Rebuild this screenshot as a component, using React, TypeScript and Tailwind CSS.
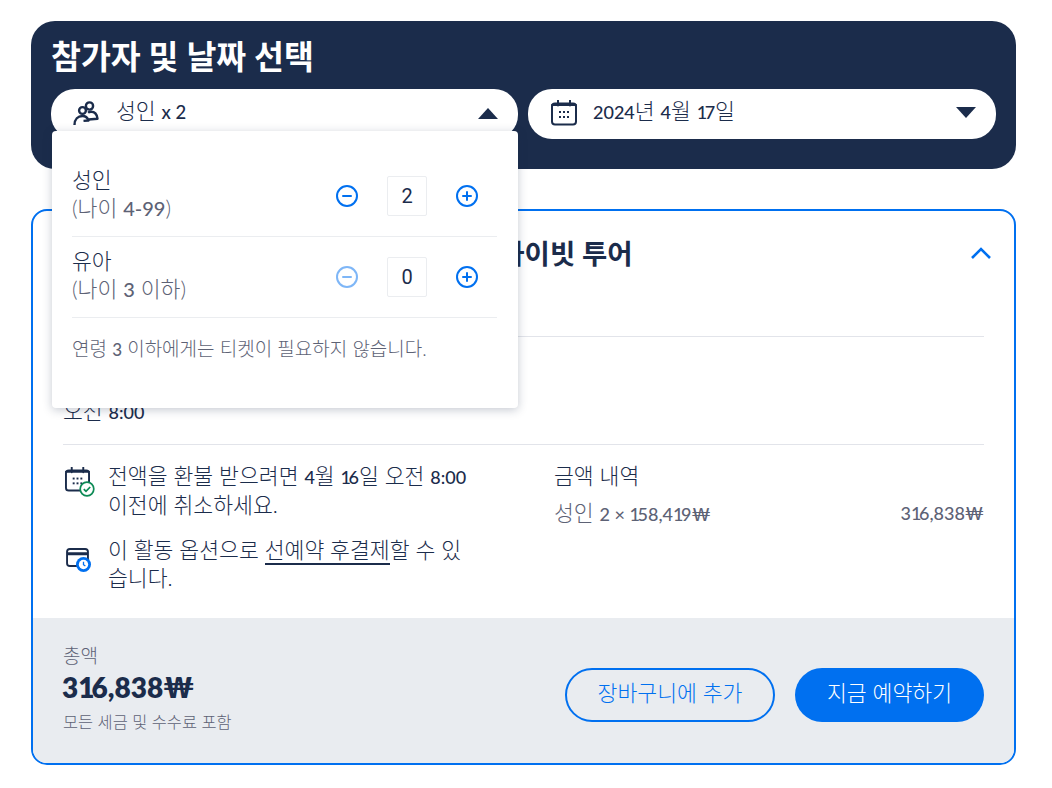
import { CircleMinus, CirclePlus } from "lucide-react";

const L = ({ children }: { children: React.ReactNode }) => (
  <span className="text-[18px] font-medium">{children}</span>
);
const S = ({ children }: { children: React.ReactNode }) => (
  <span className="text-[17px] font-medium">{children}</span>
);
const One = () => <span className="tracking-[-2.5px]">1</span>;

const Counter = ({ value, disabled }: { value: number; disabled?: boolean }) => (
  <div className="flex items-center text-[#0070f0]">
    <CircleMinus size={24} strokeWidth={2} className={disabled ? "opacity-50" : ""} />
    <div className="mx-[28px] flex h-10 w-10 items-center justify-center rounded-[2px] border border-[#ebedf0] bg-white font-['Roboto',sans-serif] text-[20px] text-[#1b2c4b]">
      {value}
    </div>
    <CirclePlus size={24} strokeWidth={2} />
  </div>
);

const CalendarIcon = ({ className }: { className?: string }) => (
  <svg viewBox="0 0 26 26" fill="none" className={className} stroke="#1b2c4b" strokeWidth="2">
    <rect x="1" y="3.5" width="24" height="21" rx="3" />
    <path d="M7 0.5v5M19 0.5v5M1 5h24" strokeLinecap="round" />
    <g stroke="none" fill="#1b2c4b">
      <rect x="8" y="11" width="2" height="2" />
      <rect x="12" y="11" width="2" height="2" />
      <rect x="16" y="11" width="2" height="2" />
      <rect x="8" y="16" width="2" height="2" />
      <rect x="12" y="16" width="2" height="2" />
      <rect x="16" y="16" width="2" height="2" />
    </g>
  </svg>
);

export default function App() {
  return (
    <div className="relative min-h-[788px] w-[1052px] bg-white pl-[31px] pt-[21px] font-['Lato','Noto_Sans_CJK_KR',sans-serif] text-[#1b2c4b]">
      <div className="h-[148px] w-[985px] rounded-[24px] bg-[#1b2c4b] px-5 pt-[13px]">
        <h1 className="h-[46px] text-[32.5px] font-bold leading-[46px] text-white">참가자 및 날짜 선택</h1>
        <div className="mt-[9px] flex gap-[10px]">
          <div className="flex h-[50px] w-[467px] items-center rounded-[24px] bg-white pl-[22px] pr-5">
            <svg viewBox="0 0 26 24" fill="none" stroke="#1b2c4b" strokeWidth="2.4" className="h-6 w-[26px] -translate-y-[1px]">
              <circle cx="9.5" cy="9.5" r="3.4" />
              <circle cx="16.5" cy="5" r="3.6" />
              <path d="M1.5 24c0-6 3.5-9 8-9 3.2 0 5 1.5 6 4.5l-5 .4" strokeLinejoin="round" />
              <path d="M15 11.6c.8-.6 1.8-.9 3-.9 3.5 0 6 2.6 6.5 7l-9 .8" strokeLinejoin="round" />
            </svg>
            <span className="ml-[17px] -translate-y-[3px] text-[21.6px] font-light leading-[42px]">성인 <span className="text-[18.5px] font-medium">x 2</span></span>
            <svg viewBox="0 0 20 11" className="ml-auto h-[11px] w-5 -translate-y-[1px]" fill="#1b2c4b"><path d="M10 0l10 11H0z" /></svg>
          </div>
          <div className="flex h-[50px] w-[468px] items-center rounded-[24px] bg-white pl-[23px] pr-5">
            <CalendarIcon className="h-[26px] w-[26px] -translate-y-[1px]" />
            <span className="ml-4 -translate-y-[3px] text-[21.6px] font-light"><L>2024</L>년 <L>4</L>월 <L><One />7</L>일</span>
            <svg viewBox="0 0 20 11" className="ml-auto h-[11px] w-5 -translate-y-[2px]" fill="#1b2c4b"><path d="M0 0h20L10 11z" /></svg>
          </div>
        </div>
      </div>

      <div className="mt-10 h-[556px] w-[985px] overflow-hidden rounded-[16px] border-2 border-[#0070f0]">
        <div className="flex h-[125px] items-start justify-between pl-[30px] pr-[23px] pt-[25px]">
          <h2 className="pl-[411px] text-[27.5px] font-bold leading-9">프라이빗 투어</h2>
          <svg viewBox="0 0 20 12" fill="none" stroke="#0070f0" strokeWidth="2.6" className="mt-[11px] h-3 w-5"><path d="M1 11l9-9 9 9" /></svg>
        </div>
        <div className="mx-[30px] h-[109px] border-y border-[#e2e4ea] pt-[60px] text-[21.6px] font-light leading-7">오전 <L>8:00</L></div>

        <div className="mx-[30px] flex h-[173px] pt-[17px]">
          <div className="w-[491px]">
            <div className="flex">
              <div className="relative mr-[13px] mt-[5px] h-[30px] w-[32px] shrink-0 pl-[2px]">
                <CalendarIcon className="h-[25px] w-[25px]" />
                <svg viewBox="0 0 16 16" className="absolute bottom-0 right-0 h-4 w-4" fill="#fff" stroke="#0c8a55" strokeWidth="1.7">
                  <circle cx="8" cy="8" r="6.8" />
                  <path d="M4.8 8.2l2.2 2.2 4.2-4.4" fill="none" />
                </svg>
              </div>
              <p className="w-[365px] text-[21.6px] font-light leading-7">전액을 환불 받으려면 <L>4</L>월 <L><One />6</L>일 오전 <L>8:00</L> 이전에 취소하세요.</p>
            </div>
            <div className="mt-[17px] flex">
              <div className="relative mr-[17px] mt-[12px] h-[24px] w-[28px] shrink-0 pl-[2px]">
                <svg viewBox="0 0 24 20" className="h-[19px] w-[25px]" fill="none" stroke="#1b2c4b" strokeWidth="2">
                  <rect x="1" y="1" width="22" height="18" rx="3" />
                  <path d="M1 6h22" strokeWidth="3" />
                </svg>
                <svg viewBox="0 0 16 16" className="absolute bottom-0 right-0 h-[15px] w-[15px]">
                  <circle cx="8" cy="8" r="8" fill="#0070f0" />
                  <circle cx="8" cy="8" r="5" fill="#fff" />
                  <path d="M8 5v3.2l2 1.4" fill="none" stroke="#0070f0" strokeWidth="1.4" />
                </svg>
              </div>
              <p className="w-[365px] text-[21.6px] font-light leading-7">
                이 활동 옵션으로 <span className="border-b-2 border-[#1b2c4b]">선예약 후결제</span>할 수 있습니다.
              </p>
            </div>
          </div>
          <div className="flex-1">
            <div className="text-[21.6px] font-light leading-7">금액 내역</div>
            <div className="mt-[9px] flex justify-between text-[21.6px] font-light leading-7 text-[#5d6275]">
              <span>성인 <L>2 × <One />58,4<One />9₩</L></span>
              <L>3<One />6,838₩</L>
            </div>
          </div>
        </div>

        <div className="flex h-[145px] justify-between bg-[#e9ecf0] px-[30px]">
          <div className="mt-[26px]">
            <div className="text-[19px] font-light leading-6 text-[#5d6275]">총액</div>
            <div className="-ml-px text-[28px] font-extrabold leading-[38px]">3<span className="tracking-[-3px]">1</span>6,838₩</div>
            <div className="mt-[6px] text-[16.4px] font-light leading-5 text-[#5d6275]">모든 세금 및 수수료 포함</div>
          </div>
          <div className="mt-[50px] flex gap-5 self-start text-[21.6px] font-light">
            <button className="h-[54px] w-[210px] rounded-[27px] border-2 border-[#0070f0] pb-1 text-[#0070f0]">장바구니에 추가</button>
            <button className="h-[54px] w-[189px] rounded-[27px] bg-[#0070f0] pb-1 text-white">지금 예약하기</button>
          </div>
        </div>
      </div>

      <div className="absolute left-[52px] top-[131px] h-[277px] w-[466px] rounded-[4px] bg-white pl-5 pr-[21px] pt-[29px] shadow-[0_2px_10px_rgba(27,44,75,0.25)]">
        <div className="flex h-[77px] items-start justify-between border-b border-[#ebedf0]">
          <div className="pt-[6px] text-[21.6px] font-light leading-7 text-[#1b2c4b]">
            성인
            <div className="text-[#5d6275]">(나이 <span className="text-[20px] font-medium">4-99</span>)</div>
          </div>
          <div className="pr-[18px] pt-[16px]"><Counter value={2} /></div>
        </div>
        <div className="flex h-[81px] items-start justify-between border-b border-[#ebedf0] pt-[10px]">
          <div className="text-[21.6px] font-light leading-7">
            유아
            <div className="text-[#5d6275]">(나이 <span className="text-[20px] font-medium">3</span> 이하)</div>
          </div>
          <div className="pr-[18px] pt-[10px]"><Counter value={0} disabled /></div>
        </div>
        <p className="mt-[19px] text-[19px] font-light leading-6 text-[#5d6275]">연령 <S>3</S> 이하에게는 티켓이 필요하지 않습니다.</p>
      </div>
    </div>
  );
}
